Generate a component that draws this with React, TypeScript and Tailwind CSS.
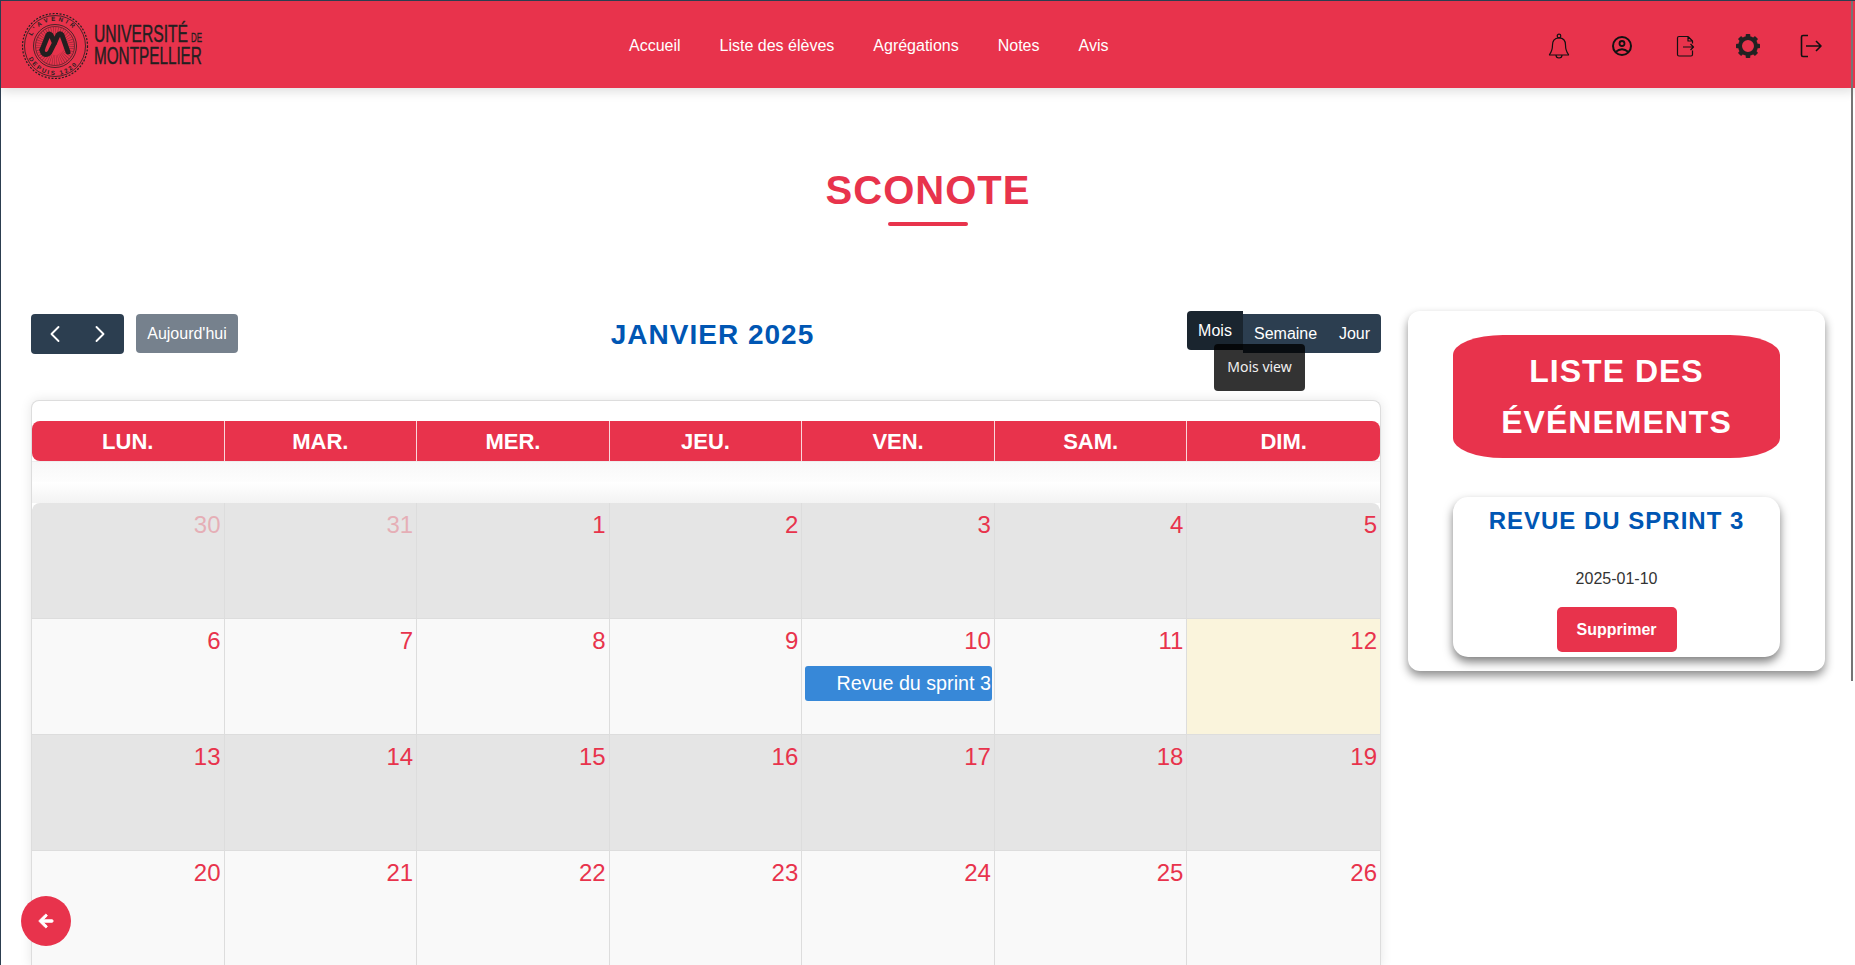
import { ChevronLeft, ChevronRight } from 'lucide-react';
import { FaArrowLeft } from 'react-icons/fa';

const days = ['Lun.', 'Mar.', 'Mer.', 'Jeu.', 'Ven.', 'Sam.', 'Dim.'];

const weeks = [
  [30, 31, 1, 2, 3, 4, 5],
  [6, 7, 8, 9, 10, 11, 12],
  [13, 14, 15, 16, 17, 18, 19],
  [20, 21, 22, 23, 24, 25, 26],
];

const navLinks = ['Accueil', 'Liste des élèves', 'Agrégations', 'Notes', 'Avis'];

function Logo() {
  return (
    <svg width="190" height="72" viewBox="0 0 190 72" className="shrink-0 mt-[3px]">
      <defs>
        <path id="sealTop" d="M11 36 a25 25 0 0 1 50 0" />
        <path id="sealBottom" d="M7 36 a29 29 0 0 0 58 0" />
      </defs>
      <circle cx="36" cy="36" r="32.5" fill="none" stroke="#231f20" strokeWidth="1.2" strokeDasharray="2 1.5" />
      <circle cx="36" cy="36" r="30.5" fill="none" stroke="#231f20" strokeWidth="0.8" />
      <circle cx="36" cy="36" r="21.5" fill="none" stroke="#231f20" strokeWidth="0.8" />
      <circle cx="36" cy="36" r="19.5" fill="none" stroke="#231f20" strokeWidth="0.6" />
      <circle cx="36" cy="36" r="14" fill="none" stroke="#231f20" strokeWidth="10" strokeDasharray="0.5 1.5" opacity="0.45" />
      <text fontSize="6" fill="#231f20" fontFamily="'Liberation Sans', sans-serif" fontWeight="700" letterSpacing="3">
        <textPath href="#sealTop" startOffset="13%">L'AVENIR</textPath>
      </text>
      <text fontSize="6" fill="#231f20" fontFamily="'Liberation Sans', sans-serif" fontWeight="700" letterSpacing="2">
        <textPath href="#sealBottom" startOffset="14%">DEPUIS 1220</textPath>
      </text>
      <path
        d="M23 40 L29 25 Q30 23 32 25 L35.5 33 L39 25 Q41 23 43 25 L49 42"
        fill="none"
        stroke="#231f20"
        strokeWidth="5"
        strokeLinecap="round"
        strokeLinejoin="round"
      />
      <path d="M23 40 Q24 46 29 44 Q31 43 32 40 L35.5 33" fill="none" stroke="#231f20" strokeWidth="5" strokeLinecap="round" />
      <text
        transform="translate(75 31.5) scale(0.682 1)"
        fontSize="23"
        fill="#231f20"
        stroke="#231f20"
        strokeWidth="0.4"
        fontFamily="'Liberation Sans', sans-serif"
      >
        UNIVERSITÉ
      </text>
      <text
        transform="translate(172 31.5) scale(0.61 1)"
        fontSize="13"
        fill="#231f20"
        stroke="#231f20"
        strokeWidth="0.3"
        fontFamily="'Liberation Sans', sans-serif"
      >
        DE
      </text>
      <text
        transform="translate(75 54) scale(0.665 1)"
        fontSize="23"
        fill="#231f20"
        stroke="#231f20"
        strokeWidth="0.4"
        fontFamily="'Liberation Sans', sans-serif"
      >
        MONTPELLIER
      </text>
    </svg>
  );
}

function BellIcon() {
  return (
    <svg width="22" height="26" viewBox="0 0 22 26" fill="none" stroke="#111" strokeWidth="1.2" strokeLinejoin="round">
      <circle cx="11" cy="3" r="1.8" />
      <path d="M11 4.8 C6 4.8 4.5 8.5 4.5 12 C4.5 17 3.5 19 1.5 21.5 L1.5 22 H20.5 V21.5 C18.5 19 17.5 17 17.5 12 C17.5 8.5 16 4.8 11 4.8 Z" />
      <path d="M8 22 a3 3 0 0 0 6 0" />
    </svg>
  );
}

function UserIcon() {
  return (
    <svg width="24" height="24" viewBox="0 0 24 24" fill="none" stroke="#111" strokeWidth="2">
      <circle cx="12" cy="12" r="9" />
      <circle cx="12" cy="9.5" r="2.5" strokeWidth="1.8" />
      <path d="M5.5 18 Q12 12.5 18.5 18" strokeWidth="1.8" />
    </svg>
  );
}

function FileExportIcon() {
  return (
    <svg width="20" height="24" viewBox="0 0 20 24" fill="none" stroke="#111" strokeWidth="1.2" strokeLinejoin="round">
      <path d="M13 2.5 H4 Q2.5 2.5 2.5 4 V20.5 Q2.5 22 4 22 H16 Q17.5 22 17.5 20.5 V16.5" />
      <path d="M13 2.5 L17.5 7 V9.5 M13 2.5 V7 H17.5" />
      <path d="M8 13 H18.5 M15.5 10 L18.5 13 L15.5 16" />
    </svg>
  );
}

function GearIcon() {
  const angles = [0, 45, 90, 135, 180, 225, 270, 315];
  return (
    <svg width="26" height="26" viewBox="0 0 26 26" fill="#222">
      <circle cx="13" cy="13" r="8" fill="none" stroke="#222" strokeWidth="4" />
      {angles.map((angle) => (
        <rect key={angle} x="10.7" y="1" width="4.6" height="4" rx="0.8" transform={`rotate(${angle} 13 13)`} />
      ))}
    </svg>
  );
}

function LogoutIcon() {
  return (
    <svg width="24" height="26" viewBox="0 0 24 26" fill="none" stroke="#111" strokeWidth="1.6" strokeLinejoin="round">
      <path d="M9 2.5 H4 Q2.5 2.5 2.5 4 V22 Q2.5 23.5 4 23.5 H9" />
      <path d="M7 13 H22 M17 8 L22 13 L17 18" />
    </svg>
  );
}

function Header() {
  const icons = [BellIcon, UserIcon, FileExportIcon, GearIcon, LogoutIcon];
  return (
    <header className="h-[87px] shrink-0 bg-[#e8334c] shadow-[0_4px_10px_rgba(0,0,0,0.12)] flex items-center pl-[18px] relative z-10">
      <Logo />
      <nav className="flex items-center gap-[39px] ml-[420px] mt-[3px] text-white text-base">
        {navLinks.map((link) => (
          <a key={link} href="#">
            {link}
          </a>
        ))}
      </nav>
      <div className="ml-auto flex items-center pr-[13px] mt-[3px]">
        {icons.map((Icon, i) => (
          <div key={i} className="w-[63px] flex justify-center">
            <Icon />
          </div>
        ))}
      </div>
    </header>
  );
}

function Toolbar() {
  return (
    <div className="flex items-start relative h-[89px]">
      <div className="flex items-start pt-[3px] gap-3 w-[400px]">
        <div className="w-[93px] h-10 bg-[#2c3e50] rounded flex items-center justify-between px-[10px] text-white">
          <ChevronLeft size={28} strokeWidth={1.6} />
          <ChevronRight size={28} strokeWidth={1.6} />
        </div>
        <button className="w-[102px] h-[39px] bg-[#2c3e50]/65 rounded text-white text-base">Aujourd'hui</button>
      </div>
      <h2 className="flex-1 text-center text-[28px] leading-10 font-bold tracking-[1px] uppercase text-[#0056b3] pt-[4px] pr-[193px]">
        Janvier 2025
      </h2>
      <div className="flex items-start relative w-[194px]">
        <button className="w-14 h-[39px] bg-[#1a252f] rounded-l text-white text-base relative z-10">Mois</button>
        <div className="mt-[3px] w-[138px] h-[39px] bg-[#2c3e50] rounded-r flex items-center justify-between pl-[11px] pr-[11px] text-white text-base">
          <span>Semaine</span>
          <span>Jour</span>
        </div>
        <div className="absolute left-[27px] top-[33px] z-20 w-[91px] h-[47px] pb-[2px] rounded bg-black/80 text-[#f0f0f0] text-sm flex items-center justify-center font-['Noto_Sans',sans-serif]">
          Mois view
        </div>
      </div>
    </div>
  );
}

function Calendar() {
  return (
    <div className="border border-b-0 border-[#ddd] rounded-t-lg shadow-[0_0_12px_rgba(0,0,0,0.1)] bg-white">
      <div className="h-5" />
      <div className="grid grid-cols-7 h-10 bg-[#e8334c] rounded-lg">
        {days.map((day, i) => (
          <div
            key={day}
            className={`flex items-center justify-center text-white font-bold text-[22px] uppercase border-white/80 ${
              i < 6 ? 'border-r' : ''
            }`}
          >
            {day}
          </div>
        ))}
      </div>
      <div className="h-[21px] bg-[linear-gradient(#f8f8f8,#fdfdfd)] border-t border-[#eee]" />
      <div className="h-[21px] bg-[linear-gradient(#fff,#f3f3f3)]" />
      {weeks.map((week, w) => (
        <div key={w} className="grid grid-cols-7 h-[116px]">
          {week.map((d, i) => {
            const isOff = w === 0 && i < 2;
            const isToday = d === 12;
            return (
              <div
                key={d}
                className={`border-b border-[#ddd] pl-1 pr-[3px] pt-[8px] text-right ${i < 6 ? 'border-r' : ''} ${
                  w === 0 && i === 0 ? 'rounded-tl-lg' : ''
                } ${w === 0 && i === 6 ? 'rounded-tr-lg' : ''} ${
                  isToday ? 'bg-[#faf4dc]' : w % 2 === 0 ? 'bg-[#e5e5e5]' : 'bg-[#f9f9f9]'
                }`}
              >
                <span className={`text-2xl leading-7 text-[#e8334c] ${isOff ? 'opacity-30' : ''}`}>{d}</span>
                {d === 10 && (
                  <div className="mt-[10px] h-[35px] bg-[#3788d8] rounded-[3px] text-white text-[19.7px] leading-[35px] text-right -ml-[1px] -mr-[1px] pr-[1px] overflow-hidden">
                    Revue du sprint 3
                  </div>
                )}
              </div>
            );
          })}
        </div>
      ))}
    </div>
  );
}

function EventList() {
  return (
    <aside className="w-[417px] h-[360px] shrink-0 bg-white rounded-xl shadow-[0_5px_10px_rgba(0,0,0,0.45)] px-[45px] pt-6">
      <h2 className="h-[123px] bg-[#e8334c] rounded-[50px/20px] text-white text-[32px] leading-[51px] font-bold tracking-[1px] uppercase text-center pt-[11px]">
        Liste des
        <br />
        événements
      </h2>
      <div className="mt-[39px] h-[160px] bg-white rounded-[15px] shadow-[0_5px_10px_rgba(0,0,0,0.5)] text-center">
        <h3 className="text-2xl leading-8 font-bold tracking-[1px] uppercase text-[#0056b3] pt-[8px]">
          Revue du sprint 3
        </h3>
        <p className="mt-[30px] text-base leading-6 text-[#333]">2025-01-10</p>
        <button className="mt-[16px] w-[120px] h-[45px] bg-[#e8334c] rounded-[5px] text-white font-bold text-base">
          Supprimer
        </button>
      </div>
    </aside>
  );
}

export default function App() {
  return (
    <div className="h-[965px] overflow-hidden relative bg-white font-['Liberation_Sans',Arial,sans-serif] text-[#212529] border-t border-l border-[#2c3e50] flex flex-col">
      <Header />
      <main className="pl-[30px] pr-[30px]">
        <div className="h-[223px] flex flex-col items-center pt-[78px]">
          <h1 className="text-[40px] leading-[48px] font-bold tracking-[1px] text-[#e8334c]">SCONOTE</h1>
          <div className="w-20 h-1 rounded-full bg-[#e8334c] mt-[8px]" />
        </div>
        <div className="flex items-start gap-[27px]">
          <div className="w-[1350px] shrink-0">
            <Toolbar />
            <Calendar />
          </div>
          <EventList />
        </div>
      </main>
      <button className="absolute left-[20px] top-[895px] w-[50px] h-[50px] rounded-full bg-[#e8334c] text-white flex items-center justify-center z-20">
        <FaArrowLeft size={16} stroke="currentColor" strokeWidth={30} />
      </button>
      <div className="absolute right-[2px] top-0 w-[2px] h-[680px] bg-[#757575] z-30" />
    </div>
  );
}
